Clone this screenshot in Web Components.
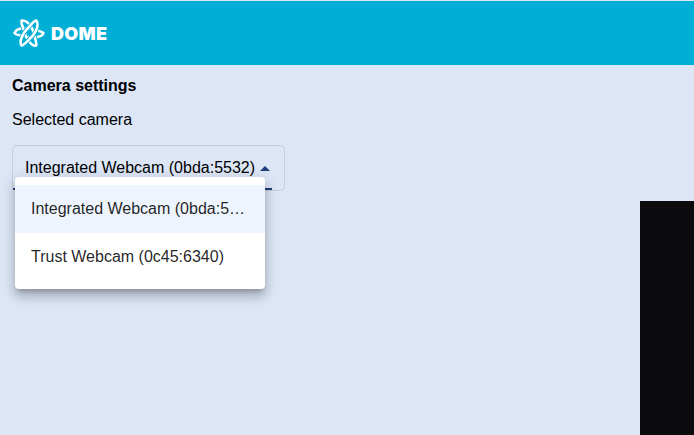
<!DOCTYPE html>
<html>
<head>
<meta charset="utf-8">
<style>
  html, body { margin: 0; height: 100%; overflow: hidden; }
  body { background: #dce6f7; font-family: "Liberation Sans", Arial, sans-serif; color: #000; }
</style>
</head>
<body>
<dome-app></dome-app>

<script>
// one woven ribbon of the logo: cyan casing under white stroke
const ribbon = (angle) => `
  <g transform="rotate(${angle})">
    <path d="M-14.500 0C-11-7 1-5 5-3.500C10-2 14-1 14.500 0C13 5 2 5-3 3.500C-9 2-14 2-14.500 0Z" stroke="#00aed6" stroke-width="4.200"/>
    <path d="M-14.500 0C-11-7 1-5 5-3.500C10-2 14-1 14.500 0C13 5 2 5-3 3.500C-9 2-14 2-14.500 0Z" stroke="#fff" stroke-width="2.600"/>
  </g>`;

class DomeHeader extends HTMLElement {
  constructor() {
    super();
    this.attachShadow({mode: "open"}).innerHTML = `
    <style>
      :host { display: flex; align-items: center; gap: 5px; box-sizing: border-box; height: 64px; margin-top: 1px; padding: 0 0 0 12px; background: #00aed6; color: #fff; }
      svg { display: block; width: 34px; height: 34px; }
      span { font: 900 18px "Inter", "Liberation Sans", sans-serif; letter-spacing: .3px; }
    </style>
    <svg viewBox="-17 -17 34 34" fill="none" stroke-linejoin="round">
      ${ribbon(0)}${ribbon(60)}${ribbon(120)}
    </svg>
    <span>DOME</span>`;
  }
}

class CameraSelect extends HTMLElement {
  constructor() {
    super();
    this.attachShadow({mode: "open"}).innerHTML = `
    <style>
      :host { display: block; position: relative; width: 273px; height: 46px; box-sizing: border-box; border: 1px solid #c8cdd6; border-radius: 5px; font-size: 16px; }
      .value { padding: 12px 0 0 12px; line-height: 20px; white-space: nowrap; }
      .caret { position: absolute; left: 247px; top: 20px; width: 0; height: 0; border: 5px solid transparent; border-top: 0; border-bottom: 5px solid #1f3f7f; }
      .line { position: absolute; left: 0; bottom: 0; width: 259px; height: 2px; background: #1f3f7f; }
      .menu { position: absolute; left: 2px; top: 31px; width: 250px; padding: 8px 0; background: #fff; border-radius: 4px;
        box-shadow: 0 5px 5px -3px rgba(0,0,0,.2), 0 8px 10px 1px rgba(0,0,0,.14), 0 3px 14px 2px rgba(0,0,0,.12); }
    </style>
    <div class="value">Integrated Webcam (0bda:5532)</div>
    <div class="caret"></div>
    <div class="line"></div>
    <div class="menu"><slot></slot></div>`;
  }
}

class CameraOption extends HTMLElement {
  constructor() {
    super();
    this.attachShadow({mode: "open"}).innerHTML = `
    <style>
      :host { display: block; box-sizing: border-box; height: 48px; padding: 14px 16px; line-height: 20px; color: rgba(0,0,0,.87); overflow: hidden; white-space: nowrap; text-overflow: ellipsis; }
      :host([selected]) { background: #eef4fd; }
    </style>
    <slot></slot>`;
  }
}

class DomeApp extends HTMLElement {
  constructor() {
    super();
    this.attachShadow({mode: "open"}).innerHTML = `
    <style>
      :host { display: block; height: 435px; overflow: hidden; }
      main { display: grid; grid-template-columns: 1fr 54px; padding: 0 0 0 12px; }
      h2 { margin: 12px 0 0; font-size: 16px; line-height: 18px; font-weight: 700; }
      p { margin: 16px 0 16px; font-size: 16px; line-height: 18px; }
      .video { background: #0b0b0d; height: 300px; margin-top: 136px; }
    </style>
    <dome-header></dome-header>
    <main>
      <section>
        <h2>Camera settings</h2>
        <p>Selected camera</p>
        <camera-select>
          <camera-option selected>Integrated Webcam (0bda:5532)</camera-option>
          <camera-option>Trust Webcam (0c45:6340)</camera-option>
        </camera-select>
      </section>
      <div class="video"></div>
    </main>`;
  }
}

customElements.define("dome-header", DomeHeader);
customElements.define("camera-select", CameraSelect);
customElements.define("camera-option", CameraOption);
customElements.define("dome-app", DomeApp);
</script>
</body>
</html>
